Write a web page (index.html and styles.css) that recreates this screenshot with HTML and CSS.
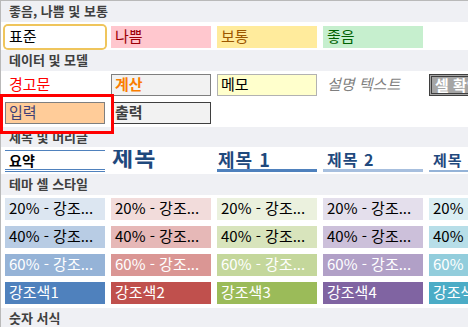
FILE: index.html
```html
<!DOCTYPE html>
<html lang="ko">
<head>
    <meta charset="UTF-8">
    <meta name="viewport" content="width=device-width, initial-scale=1.0">
    <title>셀 스타일</title>
    <link rel="stylesheet" href="styles.css">
</head>
<body>
    <div class="gallery">
        <div class="group-title">좋음, 나쁨 및 보통</div>
        <div class="group group-first">
            <div class="row">
                <div class="cell normal selected">표준</div>
                <div class="cell bad">나쁨</div>
                <div class="cell neutral">보통</div>
                <div class="cell good">좋음</div>
            </div>
        </div>

        <div class="group-title">데이터 및 모델</div>
        <div class="group">
            <div class="row">
                <div class="cell warning">경고문</div>
                <div class="cell calc">계산</div>
                <div class="cell note">메모</div>
                <div class="cell explain">설명 텍스트</div>
                <div class="cell check">셀 확인</div>
            </div>
            <div class="row">
                <div class="cell input">입력</div>
                <div class="cell output">출력</div>
            </div>
        </div>

        <div class="group-title short">제목 및 머리글</div>
        <div class="group group-titles">
            <div class="row">
                <div class="cell total">요약</div>
                <div class="cell title">제목</div>
                <div class="cell heading1">제목 1</div>
                <div class="cell heading2">제목 2</div>
                <div class="cell heading3">제목 3</div>
            </div>
        </div>

        <div class="group-title">테마 셀 스타일</div>
        <div class="group group-theme">
            <div class="row">
                <div class="cell a1-20">20% - 강조...</div>
                <div class="cell a2-20">20% - 강조...</div>
                <div class="cell a3-20">20% - 강조...</div>
                <div class="cell a4-20">20% - 강조...</div>
                <div class="cell a5-20">20% - 강조...</div>
            </div>
            <div class="row">
                <div class="cell a1-40">40% - 강조...</div>
                <div class="cell a2-40">40% - 강조...</div>
                <div class="cell a3-40">40% - 강조...</div>
                <div class="cell a4-40">40% - 강조...</div>
                <div class="cell a5-40">40% - 강조...</div>
            </div>
            <div class="row">
                <div class="cell light a1-60">60% - 강조...</div>
                <div class="cell light a2-60">60% - 강조...</div>
                <div class="cell light a3-60">60% - 강조...</div>
                <div class="cell light a4-60">60% - 강조...</div>
                <div class="cell light a5-60">60% - 강조...</div>
            </div>
            <div class="row">
                <div class="cell light a1">강조색1</div>
                <div class="cell light a2">강조색2</div>
                <div class="cell light a3">강조색3</div>
                <div class="cell light a4">강조색4</div>
                <div class="cell light a5">강조색5</div>
            </div>
        </div>

        <div class="group-title">숫자 서식</div>
    </div>

    <div class="callout"></div>
</body>
</html>
```

FILE: styles.css
```css
html, body {
    margin: 0;
    overflow: hidden;
}
body {
    position: relative;
    font-family: "Noto Sans CJK KR", "Noto Sans", sans-serif;
    background: #eff0f4;
}
.gallery {
    width: 620px;
    border-top: 1px solid #b9b9b9;
    border-left: 1px solid #b9b9b9;
}
.group-title {
    height: 21px;
    line-height: 20px;
    padding-left: 8px;
    background: #eff0f4;
    font-size: 13px;
    font-weight: bold;
    color: #404040;
}
.group-title.short {
    height: 20px;
    line-height: 19px;
}
.group {
    display: flex;
    flex-direction: column;
    gap: 6px;
    padding: 3px 4px;
    background: #fff;
}
.group-first { padding: 4px 4px 2px; }
.group-titles { padding: 3px 4px 2px; }
.group-theme { padding: 3px 4px 4px; }
.row {
    display: flex;
    gap: 6px;
}
.cell {
    flex: 0 0 100px;
    box-sizing: border-box;
    height: 22px;
    line-height: 18px;
    padding: 0 3px;
    font-size: 15px;
    color: #000;
    white-space: nowrap;
    overflow: hidden;
    border: 1px solid transparent;
}

/* good, bad, neutral */
.selected {
    border-color: #fff;
    box-shadow: 0 0 0 2px #efc55c;
    border-radius: 3px;
    overflow: visible;
}
.bad { background: #ffc7ce; color: #9c0006; }
.neutral { background: #ffeb9c; color: #9c5700; }
.good { background: #c6efce; color: #006100; }

/* data and model */
.warning { color: #ff0000; }
.calc { background: #f2f2f2; border-color: #7f7f7f; color: #fa7d00; font-weight: bold; }
.note { background: #ffffcc; border-color: #b2b2b2; }
.explain { color: #7f7f7f; font-style: italic; }
.check {
    background: #a5a5a5;
    border: 3px double #3f3f3f;
    line-height: 15px;
    color: #fff;
    font-weight: bold;
}
.input { background: #ffcc99; border-color: #7f7f7f; color: #3f3f76; }
.output { background: #f2f2f2; border-color: #3f3f3f; color: #3f3f3f; font-weight: bold; }

/* titles and headings */
.total {
    border: 0;
    border-top: 1px solid #4f81bd;
    border-bottom: 3px double #4f81bd;
    line-height: 18px;
    padding-left: 4px;
    font-size: 14px;
    font-weight: bold;
}
.title {
    border: 0;
    font-size: 23px;
    line-height: 13px;
    padding-left: 1px;
    letter-spacing: 1px;
    font-weight: bold;
    color: #1f497d;
}
.heading1, .heading2, .heading3 {
    border: 0;
    padding-left: 1px;
    font-weight: bold;
    color: #1f497d;
}
.heading1 { font-size: 18px; line-height: 19px; letter-spacing: 1px; border-bottom: 3px solid #4f81bd; }
.heading2 { font-size: 16px; line-height: 19px; letter-spacing: 1px; border-bottom: 3px solid #a7bfde; padding-left: 4px; }
.heading3 { font-size: 15px; line-height: 20px; letter-spacing: 1px; border-bottom: 2px solid #95b3d7; padding-left: 4px; }

/* theme styles */
.light { color: #fff; }
.a1-20 { background: #dce6f1; }
.a2-20 { background: #f2dcdb; }
.a3-20 { background: #ebf1de; }
.a4-20 { background: #e4dfec; }
.a5-20 { background: #daeef3; }
.a1-40 { background: #b8cce4; }
.a2-40 { background: #e6b8b7; }
.a3-40 { background: #d8e4bc; }
.a4-40 { background: #ccc0da; }
.a5-40 { background: #b7dee8; }
.a1-60 { background: #95b3d7; }
.a2-60 { background: #da9694; }
.a3-60 { background: #c4d79b; }
.a4-60 { background: #b1a0c7; }
.a5-60 { background: #92cddc; }
.a1 { background: #4f81bd; }
.a2 { background: #c0504d; }
.a3 { background: #9bbb59; }
.a4 { background: #8064a2; }
.a5 { background: #4bacc6; }

.callout {
    position: absolute;
    left: 0;
    top: 94px;
    width: 114px;
    height: 40px;
    box-sizing: border-box;
    border: 3px solid #ff0000;
}
```
